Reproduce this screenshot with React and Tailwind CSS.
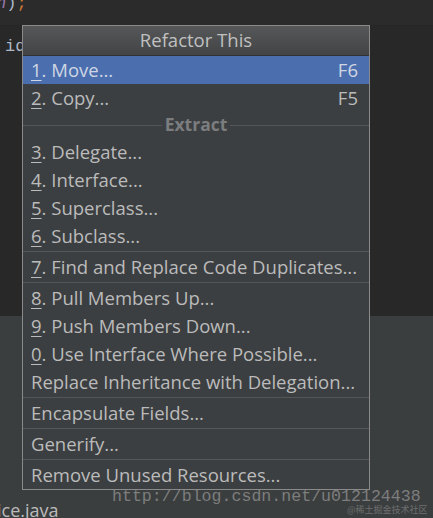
import React from "react";

const Item = ({ num, label, shortcut, selected }) => (
  <div
    className={`flex items-center justify-between h-[28px] pl-[8px] pr-[11px] ${
      selected ? "bg-[#4b6eaf] text-[#cfd6e3]" : "text-[#bbbbbb]"
    }`}
  >
    <span className="whitespace-nowrap">
      {num !== undefined && <span className="underline underline-offset-[3px]">{num}</span>}
      {num !== undefined ? ". " : ""}
      {label}
    </span>
    {shortcut && <span>{shortcut}</span>}
  </div>
);

const Sep = () => <div className="h-px my-px bg-[#545657]" />;

export default function App() {
  return (
    <div
      className="relative w-[433px] h-[518px] overflow-hidden bg-[#282828] flex flex-col"
      style={{ fontFamily: '"Open Sans", "Noto Sans", sans-serif' }}
    >
      {/* top code line */}
      <div className="h-[26px] bg-[#2b2b2b] border-b border-[#252525] relative shrink-0">
        <div className="absolute left-[-4px] top-[-9px] text-[17px] font-['Liberation_Mono',monospace] whitespace-nowrap">
          <span className="italic text-[#9876aa]">n</span>
          <span className="text-[#a9b7c6]">)</span>
          <span className="text-[#cc7832]">;</span>
        </div>
      </div>
      {/* editor area */}
      <div className="h-[290px] shrink-0 pl-[5px] pt-[7px]">
        <span className="text-[17px] text-[#a9b7c6] font-['Liberation_Mono',monospace]">id</span>
      </div>
      {/* bottom panel */}
      <div className="flex-1 bg-[#3b3e3f] flex flex-col justify-end">
        <div className="text-[18px] text-[#bbbbbb] leading-[20px] ml-[-3px] mb-[-2px]">ice.java</div>
      </div>

      {/* watermark */}
      <div className="absolute left-[112px] top-[485px] text-[16.6px] text-[#7d7d7d] font-['Liberation_Mono',monospace] whitespace-nowrap">
        http://blog.csdn.net/u012124438
      </div>
      <div
        className="absolute left-[347px] top-[505px] text-[9px] leading-none text-[#6e6e6e] whitespace-nowrap"
        style={{ fontFamily: '"Noto Sans CJK SC", sans-serif' }}
      >
        @稀土掘金技术社区
      </div>

      {/* popup menu */}
      <div className="absolute left-[22px] top-[25px] w-[348px] border border-[#8a8a8a] bg-[#3c3f41] text-[18.5px] leading-none">
        <div className="h-[30px] flex items-center justify-center bg-gradient-to-b from-[#555758] to-[#424446] border-b border-[#323232] text-[#c0c0c0] text-[18.5px]">
          Refactor This
        </div>
        <Item num="1" label="Move..." shortcut="F6" selected />
        <Item num="2" label="Copy..." shortcut="F5" />
        <div className="h-[26px] flex items-center">
          <div className="flex-1 h-px bg-[#545657]" />
          <span className="px-[3px] font-bold text-[#7b7d7f] text-[17.5px]">Extract</span>
          <div className="flex-1 h-px bg-[#545657]" />
        </div>
        <Item num="3" label="Delegate..." />
        <Item num="4" label="Interface..." />
        <Item num="5" label="Superclass..." />
        <Item num="6" label="Subclass..." />
        <Sep />
        <Item num="7" label="Find and Replace Code Duplicates..." />
        <Sep />
        <Item num="8" label="Pull Members Up..." />
        <Item num="9" label="Push Members Down..." />
        <Item num="0" label="Use Interface Where Possible..." />
        <Item label="Replace Inheritance with Delegation..." />
        <Sep />
        <Item label="Encapsulate Fields..." />
        <Sep />
        <Item label="Generify..." />
        <Sep />
        <Item label="Remove Unused Resources..." />
      </div>
    </div>
  );
}
